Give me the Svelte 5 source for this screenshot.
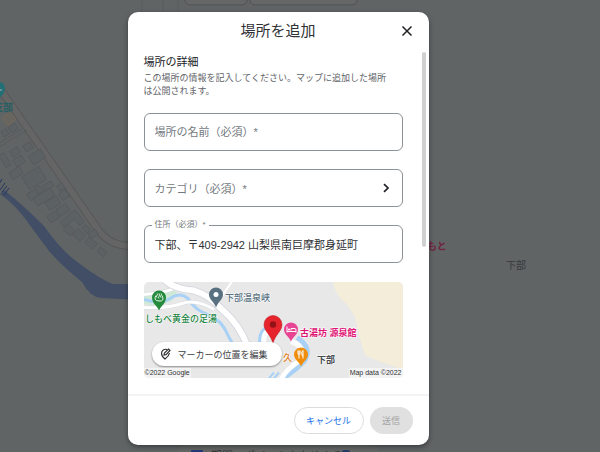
<script>
  let name = $state('');
  let address = $state('下部、〒409-2942 山梨県南巨摩郡身延町');

  // Footprints: centre x, centre y, width, height, rotation
  const buildings = [
    [13, 128, 8, 7, -32], [5, 133, 6, 6, -32], [28, 147, 8, 7, -32],
    [15, 152, 9, 7, -32], [37, 157, 14, 10, -32], [19, 161, 10, 8, -32],
    [5, 160, 6, 14, -32], [16, 173, 12, 8, -32], [34, 178, 20, 15, -32],
    [48, 186, 10, 6, -32], [33, 195, 10, 8, -32], [39, 190, 5, 7, -32],
    [44, 197, 20, 9, -32], [61, 187, 6, 6, -32], [64, 195, 8, 8, -32],
    [53, 203, 13, 9, -32], [63, 210, 11, 8, -32], [53, 217, 10, 8, -32],
    [69, 230, 9, 7, 40], [79, 235, 10, 8, 40], [91, 243, 10, 7, 40],
    [102, 252, 8, 6, 35], [86, 229, 7, 5, 40], [93, 234, 9, 6, -30]
  ];
</script>

<main class="screen">
  <svg class="backdrop" viewBox="0 0 600 452" preserveAspectRatio="xMinYMin slice" aria-hidden="true">
    <rect width="600" height="452" fill="#606465" />
    <path d="M-2 86 97 228Q109 247 134 246" fill="none" stroke="#575859" stroke-width="8" />
    <path d="M-2 86 97 228Q109 247 134 246" fill="none" stroke="#656566" stroke-width="6" />
    <path d="M-4 149 27 130M-2 144 22 129" fill="none" stroke="#585a5b" stroke-width="1" />
    <path d="M4 190Q22 204 44 226Q60 249 76 261Q101 280 113 284L140 284V300L101 298Q90 297 82 282Q62 266 49 251L29 224Q16 205 0 194Z" fill="#424e66" />
    <path d="m-3 188 5-9M0 190l5-7M2 192l5-6M4 195l5-7" stroke="#263761" />
    {#each buildings as [x, y, w, h, turn]}
      <rect x={x - w / 2} y={y - h / 2} width={w} height={h} fill="#5c6164" stroke="#56595b" stroke-width=".8" transform="rotate({turn} {x} {y})" />
    {/each}
    <path d="m60 222 15-12 9 11-4 5-6-7-10 8Z" fill="#5c6164" stroke="#56595b" stroke-width=".8" />
    <path d="m2 118 8-6 6 7-8 7Z" fill="#686560" stroke="#75695a" />
    <path d="M-3 82Q5 81 5 89Q5 94-2 99Z" fill="#246e76" />
    <path d="M0 90h2" stroke="#a5b5b6" />
    <text x="-7" y="111" class="place teal">支部</text>
    <text x="427" y="250" class="place pink">もと</text>
    <text x="506" y="269" class="place">下部</text>
    <path d="M142 0v14M163 0v14M178 0v14" stroke="#595d5e" />
    <rect x="185" y="-15" width="62" height="20" rx="5" fill="#656767" stroke="#505354" />
    <rect x="250" y="-15" width="107" height="20" rx="5" fill="#656767" stroke="#505354" />
    <rect x="178" y="445" width="200" height="20" rx="6" fill="#656767" />
    <rect x="191" y="450" width="12" height="12" rx="1" fill="#223a78" />
    <text x="211" y="460" class="strip">期間：ポイントをためよう</text>
    <rect x="342" y="450" width="8" height="8" rx="2" fill="#263d68" />
  </svg>

  <div class="dialog" role="dialog" aria-modal="true" aria-labelledby="dialog-title">
    <header>
      <h1 id="dialog-title">場所を追加</h1>
      <button class="close" type="button" aria-label="閉じる">
        <svg width="12" height="12" viewBox="0 0 12 12"><path d="m1.5 1.5 9 9M10.5 1.5l-9 9" fill="none" stroke="#202124" stroke-width="1.5" /></svg>
      </button>
    </header>

    <div class="content">
      <section class="intro">
        <h2>場所の詳細</h2>
        <p>この場所の情報を記入してください。マップに追加した場所は公開されます。</p>
      </section>

      <div class="fields">
        <input class="field" aria-label="場所の名前（必須）" placeholder="場所の名前（必須）*" bind:value={name} required />
        <button class="field category" type="button">
          <span>カテゴリ（必須）*</span>
          <svg width="8" height="10" viewBox="0 0 8 10"><path d="m2 1.2 4 3.8-4 3.8" fill="none" stroke="#202124" stroke-width="1.7" /></svg>
        </button>
        <div class="labelled">
          <label for="address">住所（必須）*</label>
          <input id="address" class="field" bind:value={address} required />
        </div>
      </div>

      <div class="map">
        <svg class="map-art" viewBox="0 0 259 97" preserveAspectRatio="xMidYMid slice" role="img" aria-label="下部の地図">
          <rect width="259" height="97" fill="#e8e8e8" />
          <path d="M189 0Q191 14 202 22L211 35L215 54L221 74Q237 81 259 88V0Z" fill="#f4edd9" />
          <path d="M0 12 24 7 33 11 28 19Q12 27 0 22Z" fill="#ceead6" />
          <path d="M0 18Q17 23 26 17Q36 10 44 17Q51 29 66 34Q78 39 84 54L92 68" fill="none" stroke="#a9d1f5" stroke-width="3" />
          <path d="M0 13Q22 11 30 7M0 26Q25 27 38 22Q52 17 70 28" fill="none" stroke="#d6d9df" stroke-width="4" />
          <path d="M0 13Q22 11 30 7M0 26Q25 27 38 22Q52 17 70 28" fill="none" stroke="#fff" stroke-width="3" />
          <path d="M20 -2Q31 8 50 9Q66 14 77 27Q96 43 104 66" fill="none" stroke="#d6d9df" stroke-width="8" />
          <path d="M20 -2Q31 8 50 9Q66 14 77 27Q96 43 104 66" fill="none" stroke="#fff" stroke-width="6" />
          <path d="M88 0 73 22" fill="none" stroke="#fff" stroke-width="2" />
          <path d="M117 62Q115 50 125 46M153 56Q169 66 160 80Q149 91 137 98" fill="none" stroke="#a9d1f5" stroke-width="5" />
          <path d="M120 62Q118 51 128 47M147 60Q162 64 156 79Q142 88 137 98" fill="none" stroke="#fff" stroke-width="5" />
          <path d="m124 98 6-7M129 98l6-7" fill="none" stroke="#a9d1f5" stroke-width="2" />

          <path d="M15 29C13 24 8 22 8 16a7 7 0 0 1 14 0C22 22 17 24 15 29Z" fill="#248b3d" />
          <path d="M12 14Q9 19 15 19.500T18 14M13 16q-1-1 0-2t0-2M15 17q-1-1 0-2t0-3M17 16q-1-1 0-2t0-2" fill="none" stroke="#fff" stroke-width=".9" />
          <path d="M72 26C70 20 65 18 65 13a7 7 0 0 1 14 0C79 18 74 20 72 26Z" fill="#587080" />
          <circle cx="72" cy="13" r="2.5" fill="#fff" />
          <path d="M129 62C127 53 120 50 120 43a9 9 0 0 1 18 0C138 50 131 53 129 62Z" fill="#e5252b" stroke="#b91720" stroke-width=".5" />
          <circle cx="129" cy="43" r="3.2" fill="#931218" />
          <path d="M147 60C145 55 140 53 140 48a7 7 0 0 1 14 0C154 53 149 55 147 60Z" fill="#e74494" />
          <path d="M143 45v6M143 50h9v1M147 49v-2h4q1 0 1 2v1" fill="none" stroke="#fff" stroke-width="1" />
          <circle cx="145" cy="48" r="1" fill="#fff" />
          <path d="M157 85C155 80 150 78 150 73a7 7 0 0 1 14 0C164 78 159 80 157 85Z" fill="#ef8d0c" />
          <path d="M154 69v3q0 1 1 1t1-1v-3M155 69v8M159 77v-8q-2 1-1 5h1" fill="none" stroke="#fff" stroke-width="1" />
          <text x="81" y="19" class="map-label slate">下部温泉峡</text>
          <text x="1" y="40" class="map-label green">しもべ黄金の足湯</text>
          <text x="156" y="54" class="map-label magenta">古湯坊 源泉館</text>
          <text x="139" y="79" class="map-label orange">久</text>
          <text x="173" y="81" class="map-label town">下部</text>
        </svg>
        <button class="edit" type="button">
          <svg width="12" height="12" viewBox="0 0 12 12"><path d="M7 1.500A4.200 4.200 0 0 0 1.500 5.500Q1.500 8 5 11Q9 8 9.500 5M4 7l.4-2L8.500 1 10 2.500 6 6.600Z" fill="none" stroke="#303134" stroke-width="1.2" /></svg>
          マーカーの位置を編集
        </button>
        <div class="credits"><span>©2022 Google</span><span>Map data ©2022</span></div>
      </div>
    </div>
    <div class="scrollbar" aria-hidden="true"></div>

    <footer>
      <button class="cancel" type="button">キャンセル</button>
      <button class="submit" type="button" disabled>送信</button>
    </footer>
  </div>
</main>

<style>
  :global(body) { margin: 0; background: #606465; }
  * { box-sizing: border-box; }
  .screen {
    position: relative;
    display: flex;
    justify-content: center;
    min-height: 100vh;
    padding: 12px 44px 7px 0;
    overflow: hidden;
    font-family: "Liberation Sans", "Noto Sans CJK JP", sans-serif;
    color: #3c4043;
  }
  .backdrop { position: absolute; inset: 0; width: 100%; height: 100%; }
  .place { font-size: 10px; fill: #36393a; }
  .teal { fill: #255f63; font-weight: bold; }
  .pink { fill: #702440; font-weight: bold; }
  .strip { font-size: 11px; fill: #303335; }
  .dialog {
    position: relative;
    display: flex;
    flex-direction: column;
    width: 301px;
    max-width: 100%;
    border-radius: 10px;
    background: #fff;
    box-shadow: 0 2px 5px #0006;
    overflow: hidden;
  }
  header {
    display: grid;
    grid-template-columns: 32px 1fr 32px;
    align-items: center;
    height: 38px;
    padding: 0 6px;
  }
  h1 { grid-column: 2; margin: 0; font-size: 15px; font-weight: 400; line-height: 20px; text-align: center; color: #303134; }
  button { margin: 0; padding: 0; border: 0; background: none; font: inherit; color: inherit; cursor: pointer; }
  .close { display: flex; justify-content: center; align-items: center; height: 24px; }
  .content { flex: 1; padding: 4px 26px 16px 16px; }
  h2 { margin: 0; font-size: 11px; font-weight: 400; line-height: 16px; color: #202124; }
  .intro p { margin: 0; padding: 2px 10px 0 0; font-size: 9px; line-height: 13px; color: #5f6368; }
  .fields { display: grid; gap: 18px; margin-top: 15px; }
  .field {
    display: block;
    width: 100%;
    height: 38px;
    padding: 0 10px;
    border: 1px solid #8b9196;
    border-radius: 6px;
    outline: 0;
    background: #fff;
    font-family: inherit;
    font-size: 11px;
    color: #303134;
  }
  .field::placeholder { color: #74797e; opacity: 1; }
  .category { display: flex; align-items: center; justify-content: space-between; padding-right: 12px; color: #74797e; }
  .labelled { position: relative; }
  label { position: absolute; top: -6px; left: 8px; padding: 0 3px; background: #fff; font-size: 8px; line-height: 12px; color: #74797e; }
  .map { position: relative; height: 96px; margin-top: 19px; overflow: hidden; border-radius: 5px; }
  .map-art { display: block; width: 100%; height: 100%; }
  .map-label { font-size: 9px; font-weight: 500; paint-order: stroke; stroke: #fff; stroke-width: 1px; }
  .slate { fill: #587080; }
  .green { fill: #218443; }
  .magenta { fill: #df1474; font-weight: bold; }
  .orange { fill: #dc7c19; }
  .town { fill: #484b50; font-weight: bold; }
  .edit {
    position: absolute;
    bottom: 12px;
    left: 8px;
    display: flex;
    align-items: center;
    gap: 6px;
    height: 24px;
    padding: 0 14px 0 8px;
    border-radius: 12px;
    background: #fff;
    box-shadow: 0 1px 2px #0006;
    font-size: 9px;
    white-space: nowrap;
  }
  .credits { position: absolute; right: 0; bottom: 0; left: 0; display: flex; justify-content: space-between; font-size: 7px; line-height: 10px; color: #303134; }
  .credits span { padding: 0 1px; background: #f5f5f5cc; }
  .scrollbar { position: absolute; top: 40px; right: 3px; width: 4px; height: 195px; border-radius: 2px; background: #d0d0d0; }
  footer { display: flex; justify-content: flex-end; gap: 6px; padding: 11px 16px; border-top: 2px solid #f1f3f4; }
  footer button { height: 27px; border-radius: 14px; font-size: 9px; }
  .cancel { width: 70px; border: 1px solid #dadce0; color: #1a73e8; }
  .submit { width: 43px; background: #e0e0e0; color: #a3a3a3; cursor: default; }
</style>
